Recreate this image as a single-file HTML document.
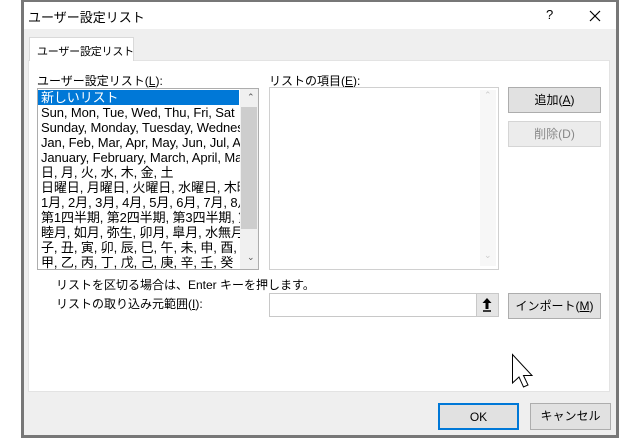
<!DOCTYPE html>
<html><head><meta charset="utf-8"><style>
*{margin:0;padding:0;box-sizing:border-box}
body{width:640px;height:438px;background:#fff;position:relative;overflow:hidden;font-family:"Liberation Sans","Noto Sans CJK JP",sans-serif;font-size:12px;color:#000}
.a{position:absolute;white-space:nowrap}
.btn{position:absolute;background:#e1e1e1;border:1px solid #adadad;text-align:center;font-size:12px}
.list div{height:15px;line-height:15px;font-size:13px;padding-left:3px;white-space:nowrap;letter-spacing:-0.1px}
u{text-decoration:underline}
</style></head><body>
<div class="a" style="left:21px;top:0;width:598px;height:438px;background:#777"></div>
<div class="a" style="left:24px;top:2px;width:592px;height:433px;background:#efefef"></div>
<div class="a" style="left:24px;top:2px;width:592px;height:27px;background:#fff"></div>
<div class="a" style="left:28px;top:7px;font-size:13px">ユーザー設定リスト</div>
<div class="a" style="left:546px;top:7px;font-size:13px">?</div>
<svg class="a" style="left:589px;top:10px" width="12" height="12"><path d="M1 1L11 11M11 1L1 11" stroke="#000" stroke-width="1.2"/></svg>
<div class="a" style="left:28px;top:60px;width:582px;height:332px;background:#fff;border:1px solid #e3e3e3"></div>
<div class="a" style="left:29px;top:37px;width:105px;height:24px;background:#fff;border:1px solid #d9d9d9;border-bottom:none;font-size:11px;padding:5px 0 0 7px;letter-spacing:-0.2px;overflow:hidden">ユーザー設定リスト</div>
<div class="a" style="left:37px;top:72px">ユーザー設定リスト(<u>L</u>):</div>
<div class="a" style="left:269px;top:72px">リストの項目(<u>E</u>):</div>
<div class="a list" style="left:37px;top:88px;width:222px;height:182px;border:1px solid #adadad;overflow:hidden;padding-top:1px">
<div style="background:#0078d7;color:#fff;width:201px">新しいリスト</div>
<div>Sun, Mon, Tue, Wed, Thu, Fri, Sat</div>
<div>Sunday, Monday, Tuesday, Wednesday</div>
<div>Jan, Feb, Mar, Apr, May, Jun, Jul, Aug</div>
<div>January, February, March, April, May</div>
<div>日, 月, 火, 水, 木, 金, 土</div>
<div>日曜日, 月曜日, 火曜日, 水曜日, 木曜日</div>
<div>1月, 2月, 3月, 4月, 5月, 6月, 7月, 8月</div>
<div>第1四半期, 第2四半期, 第3四半期, 第4</div>
<div>睦月, 如月, 弥生, 卯月, 皐月, 水無月, 文</div>
<div>子, 丑, 寅, 卯, 辰, 巳, 午, 未, 申, 酉, 戌</div>
<div>甲, 乙, 丙, 丁, 戊, 己, 庚, 辛, 壬, 癸</div>
<div class="a" style="left:202px;top:0;width:18px;height:180px;background:#f0f0f0;padding:0"></div>
<div class="a" style="left:203px;top:18px;width:16px;height:122px;background:#cdcdcd;padding:0"></div>
<div class="a" style="left:206px;top:1px;font-size:9px;color:#555">⌃</div>
<div class="a" style="left:206px;top:161px;font-size:9px;color:#555">⌄</div>
</div>
<div class="a" style="left:269px;top:87px;width:230px;height:183px;border:1px solid #d0d0d0"></div>
<div class="a" style="left:480px;top:90px;width:16px;height:176px;background:#f7f7f7"></div>
<div class="a" style="left:484px;top:90px;font-size:9px;color:#ccc">⌃</div>
<div class="a" style="left:484px;top:250px;font-size:9px;color:#ccc">⌄</div>
<div class="btn" style="left:508px;top:87px;width:93px;height:26px;line-height:24px">追加(<u>A</u>)</div>
<div class="btn" style="left:508px;top:121px;width:93px;height:26px;line-height:24px;background:#ececec;border-color:#d5d5d5;color:#888">削除(D)</div>
<div class="a" style="left:56px;top:276px">リストを区切る場合は、Enter キーを押します。</div>
<div class="a" style="left:56px;top:295px">リストの取り込み元範囲(<u>I</u>):</div>
<div class="a" style="left:269px;top:293px;width:230px;height:24px;border:1px solid #c8c8c8;background:#fff"></div>
<div class="a" style="left:476px;top:294px;width:22px;height:22px;background:#e5e5e5;border-left:1px solid #c8c8c8"></div>
<svg class="a" style="left:481px;top:297px" width="12" height="16"><path d="M6 1L1.5 6H4.5V12H7.5V6H10.5Z" fill="#000"/><path d="M2 14H10" stroke="#000" stroke-width="1.5"/></svg>
<div class="btn" style="left:508px;top:293px;width:93px;height:26px;line-height:24px">インポート(<u>M</u>)</div>
<svg class="a" style="left:511px;top:353px" width="28" height="40"><path d="M1.5 1.5V30L8 24L12.5 34L17 32L12.5 22.5H21Z" fill="#fff" stroke="#000" stroke-width="1"/></svg>
<div class="btn" style="left:438px;top:403px;width:81px;height:27px;line-height:25px;border:2px solid #0078d7;background:#e1e1e1">OK</div>
<div class="btn" style="left:530px;top:403px;width:81px;height:27px;line-height:25px">キャンセル</div>
</body></html>
